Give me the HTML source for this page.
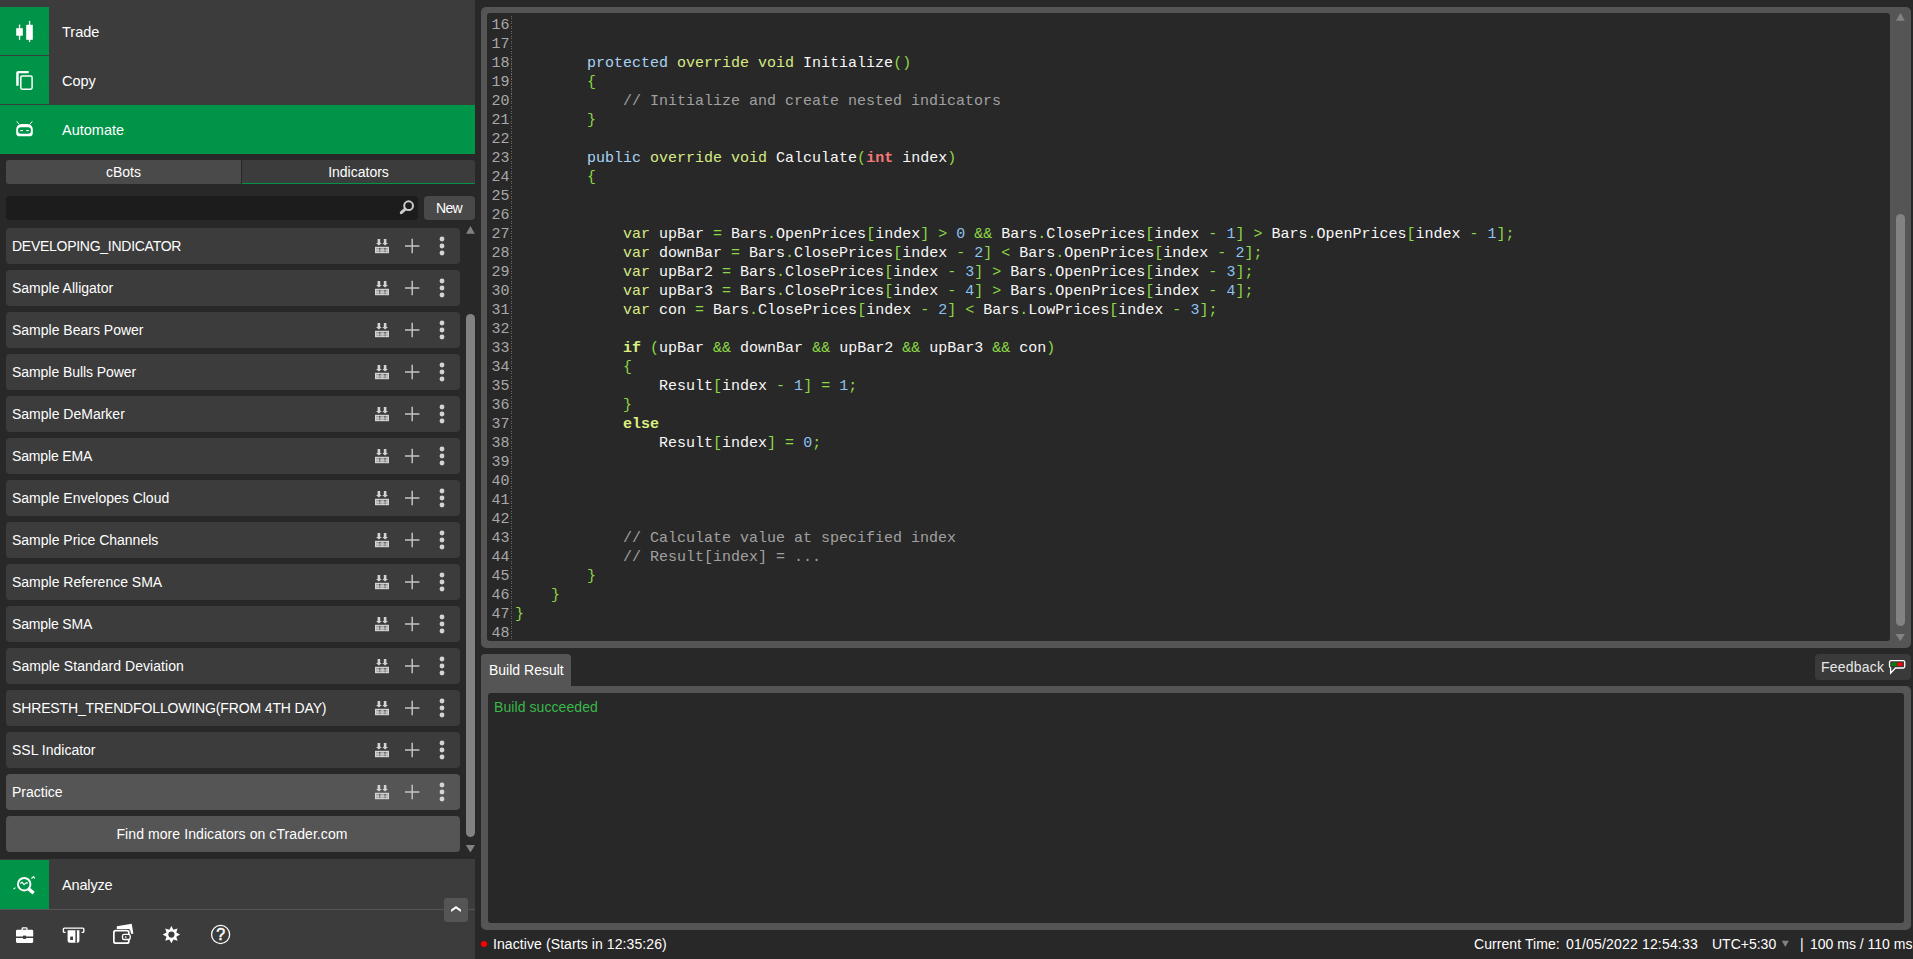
<!DOCTYPE html>
<html>
<head>
<meta charset="utf-8">
<title>cTrader Automate</title>
<style>
*{box-sizing:border-box;margin:0;padding:0}
html,body{width:1913px;height:959px;overflow:hidden;background:#282828}
body{position:relative;font-family:"Liberation Sans",sans-serif;color:#fff;font-size:14px}
.abs{position:absolute}
svg{display:block}
/* left panel */
#lp-top{left:0;top:0;width:475px;height:154px;background:#3c3c3c}
.nav{left:0;width:475px;height:48px}
.nav .ib{position:absolute;left:0;top:0;width:49px;height:100%;background:#009448}
.nav .lbl{position:absolute;left:62px;top:1px;height:100%;line-height:48px;font-size:14.5px;color:#fff;white-space:nowrap}
.nav svg{position:absolute;left:0;top:0}
#nav-auto{background:#009448;height:49px}
.tab{top:160px;height:24px;line-height:24px;text-align:center;font-size:14px;color:#fff}
#tab-cbots{left:6px;width:235px;background:#4a4a4a;border-radius:3px 0 0 3px}
#tab-ind{left:242px;width:233px;background:#3c3c3c;border-radius:0 3px 0 0;border-bottom:1px solid #009448}
#search{left:6px;top:196px;width:412px;height:24px;background:#1c1c1c;border-radius:4px}
#newbtn{left:424px;top:196px;width:51px;height:24px;background:#494949;border-radius:4px;text-align:center;line-height:24px;font-size:14px;letter-spacing:-0.6px;padding-right:1px}
.row{left:6px;width:454px;height:36px;background:#3c3c3c;border-radius:4px}
.row.sel{background:#555}
.row .t{position:absolute;left:6px;top:0;line-height:36px;font-size:14px;white-space:nowrap;color:#fff}
.row svg{position:absolute;left:0;top:0}
#findmore{left:6px;top:816px;width:454px;height:36px;background:#555;border-radius:4px;text-align:center;line-height:36px;font-size:14px;letter-spacing:.08px}
#lscroll{left:466px;top:314px;width:9px;height:523px;background:#828282;border-radius:4.5px}
.tri-up{width:0;height:0;border-left:4.7px solid transparent;border-right:4.7px solid transparent;border-bottom:8px solid #858585}
.tri-dn{width:0;height:0;border-left:4.7px solid transparent;border-right:4.7px solid transparent;border-top:8px solid #858585}
#analyze{left:0;top:859px;width:475px;height:50px;background:#3c3c3c}
#lsep{left:0;top:909px;width:475px;height:1px;background:#555}
#lbottom{left:0;top:910px;width:475px;height:49px;background:#3c3c3c}
#chev{left:444px;top:898px;width:24px;height:24px;background:#555;border-radius:3px}
/* editor */
#ed-frame{left:481px;top:7px;width:1430px;height:641px;background:#555;border-radius:5px}
#ed-inner{left:487px;top:13px;width:1403px;height:628px;background:#282828;border-radius:3px;overflow:hidden}
#ed-thumb{left:1896px;top:214px;width:9px;height:412px;background:#828282;border-radius:4.5px}
#gutter-line{left:24px;top:2.500px;width:1px;height:626px;background:repeating-linear-gradient(to bottom,#6a6a6a 0,#6a6a6a 1px,transparent 1px,transparent 2.5px)}
#lnums{left:0;top:3px;width:22.5px;text-align:right;font-family:"Liberation Mono",monospace;font-size:15px;line-height:19px;color:#a8a8a8;white-space:pre}
#code{left:28px;top:3px;font-family:"Liberation Mono",monospace;font-size:15px;line-height:19px;color:#f8f8f8;white-space:pre}
.kb{color:#a8d2f4}.ky{color:#d8ea86}.g{color:#8cd846}.r{color:#f47878;font-weight:bold}.n{color:#8cc2f0}.c{color:#a0a0a0}.kw{color:#dcf080;font-weight:bold}
/* build result */
#br-tab{left:481px;top:654px;width:90px;height:36px;background:#555;border-radius:4px 4px 0 0;font-size:14px;line-height:32px;padding-left:8px;white-space:nowrap}
#br-frame{left:481px;top:686px;width:1430px;height:244px;background:#555;border-radius:0 5px 5px 5px}
#br-inner{left:488px;top:693px;width:1416px;height:230px;background:#282828;border-radius:3px}
#br-text{left:494px;top:699px;font-size:14px;line-height:16px;color:#38b849;white-space:nowrap;letter-spacing:.08px}
#feedback{left:1815px;top:654px;width:96px;height:26px;background:#3a3a3a;border-radius:4px}
#feedback .t{position:absolute;left:6px;top:0;line-height:26px;font-size:14px;color:#e8e8e8;letter-spacing:.2px}
#feedback svg{position:absolute;left:0;top:0}
/* status bar */
.st{top:936px;line-height:16px;font-size:14px;color:#fff;white-space:nowrap}
#dot{left:481px;top:941px;width:6px;height:6px;border-radius:3px;background:#ff0000}

</style>
</head>
<body>
<div id="lp-top" class="abs"></div>
<div id="nav-trade" class="abs nav" style="top:7px"><div class="ib"></div><svg width="49" height="48" viewBox="0 0 49 48"><g fill="#fff"><rect x="16.2" y="21.2" width="6.6" height="7.5"/><rect x="18.9" y="17.6" width="1.3" height="15.2"/><rect x="26.2" y="17.8" width="6.6" height="15"/><rect x="28.9" y="13.9" width="1.3" height="21.2"/></g></svg>
<div class="lbl">Trade</div></div>
<div id="nav-copy" class="abs nav" style="top:56px"><div class="ib"></div><svg width="49" height="48" viewBox="0 0 49 48"><path d="M16.200 29.700V17.100a2 2 0 0 1 2-2H28.700v2.100H18.700V29.700z" fill="#fff"/><rect x="20.800" y="19.900" width="11.300" height="13.300" rx="1.400" fill="none" stroke="#fff" stroke-width="1.500"/></svg>
<div class="lbl">Copy</div></div>
<div id="nav-auto" class="abs nav" style="top:105px"><svg width="49" height="49" viewBox="0 0 49 49"><path d="M16.700 16.400l2.700 3.100M32.300 16.400l-2.700 3.100" stroke="#fff" stroke-width="1" fill="none"/><path d="M21.600 18.900h5.800a5.400 5.400 0 0 1 5.400 5.400v3.600a3.400 3.400 0 0 1-3.400 3.400h-9.800a3.400 3.400 0 0 1-3.400-3.400v-3.600a5.400 5.400 0 0 1 5.400-5.400z" fill="#fff"/><rect x="18.100" y="22.300" width="12.800" height="6.500" rx="2.800" fill="#009448"/><rect x="20.300" y="25" width="2.700" height="1.100" fill="#fff"/><rect x="26.200" y="25" width="2.700" height="1.100" fill="#fff"/></svg>
<div class="lbl" style="line-height:49px">Automate</div></div>
<div id="tab-cbots" class="abs tab">cBots</div>
<div id="tab-ind" class="abs tab">Indicators</div>
<div id="search" class="abs"><svg width="412" height="24" viewBox="0 0 412 24"><circle cx="402.600" cy="9.700" r="4.400" fill="none" stroke="#cbcbcb" stroke-width="2"/><path d="M399.200 13.100l-3.900 3.600" stroke="#cbcbcb" stroke-width="3" stroke-linecap="round"/></svg></div>
<div id="newbtn" class="abs">New</div>
<div class="abs row" style="top:228px"><span class="t" style="letter-spacing:-0.27px">DEVELOPING_INDICATOR</span><svg width="454" height="36" viewBox="0 0 454 36"><g fill="#d4d4d4"><path d="M371.600 11h2.600v4h1.600l-2.900 2.600-2.900-2.600h1.600z"/><path d="M377.800 11h2.600v4h1.600l-2.900 2.600-2.900-2.600h1.600z"/><rect x="369" y="18.800" width="14" height="6.400"/><circle cx="436" cy="11" r="2.450"/><circle cx="436" cy="18" r="2.450"/><circle cx="436" cy="25" r="2.450"/></g><g fill="#3c3c3c"><rect x="370" y="20.300" width="12" height="1" opacity=".45"/><rect x="370" y="22.700" width="12" height="1" opacity=".35"/><rect x="373.300" y="19.800" width="1" height="4.600" opacity=".5"/><rect x="378.500" y="19.800" width="1" height="4.600" opacity=".5"/><rect x="373.300" y="20.300" width="1" height="1"/><rect x="378.500" y="20.300" width="1" height="1"/></g><path d="M399 18h14.400M406.200 10.800v14.400" stroke="#c4c4c4" stroke-width="1.450" fill="none"/></svg>
</div>
<div class="abs row" style="top:270px"><span class="t">Sample Alligator</span><svg width="454" height="36" viewBox="0 0 454 36"><g fill="#d4d4d4"><path d="M371.600 11h2.600v4h1.600l-2.900 2.600-2.900-2.600h1.600z"/><path d="M377.800 11h2.600v4h1.600l-2.900 2.600-2.900-2.600h1.600z"/><rect x="369" y="18.800" width="14" height="6.400"/><circle cx="436" cy="11" r="2.450"/><circle cx="436" cy="18" r="2.450"/><circle cx="436" cy="25" r="2.450"/></g><g fill="#3c3c3c"><rect x="370" y="20.300" width="12" height="1" opacity=".45"/><rect x="370" y="22.700" width="12" height="1" opacity=".35"/><rect x="373.300" y="19.800" width="1" height="4.600" opacity=".5"/><rect x="378.500" y="19.800" width="1" height="4.600" opacity=".5"/><rect x="373.300" y="20.300" width="1" height="1"/><rect x="378.500" y="20.300" width="1" height="1"/></g><path d="M399 18h14.400M406.200 10.800v14.400" stroke="#c4c4c4" stroke-width="1.450" fill="none"/></svg>
</div>
<div class="abs row" style="top:312px"><span class="t">Sample Bears Power</span><svg width="454" height="36" viewBox="0 0 454 36"><g fill="#d4d4d4"><path d="M371.600 11h2.600v4h1.600l-2.900 2.600-2.900-2.600h1.600z"/><path d="M377.800 11h2.600v4h1.600l-2.900 2.600-2.900-2.600h1.600z"/><rect x="369" y="18.800" width="14" height="6.400"/><circle cx="436" cy="11" r="2.450"/><circle cx="436" cy="18" r="2.450"/><circle cx="436" cy="25" r="2.450"/></g><g fill="#3c3c3c"><rect x="370" y="20.300" width="12" height="1" opacity=".45"/><rect x="370" y="22.700" width="12" height="1" opacity=".35"/><rect x="373.300" y="19.800" width="1" height="4.600" opacity=".5"/><rect x="378.500" y="19.800" width="1" height="4.600" opacity=".5"/><rect x="373.300" y="20.300" width="1" height="1"/><rect x="378.500" y="20.300" width="1" height="1"/></g><path d="M399 18h14.400M406.200 10.800v14.400" stroke="#c4c4c4" stroke-width="1.450" fill="none"/></svg>
</div>
<div class="abs row" style="top:354px"><span class="t" style="letter-spacing:-0.06px">Sample Bulls Power</span><svg width="454" height="36" viewBox="0 0 454 36"><g fill="#d4d4d4"><path d="M371.600 11h2.600v4h1.600l-2.900 2.600-2.900-2.600h1.600z"/><path d="M377.800 11h2.600v4h1.600l-2.900 2.600-2.900-2.600h1.600z"/><rect x="369" y="18.800" width="14" height="6.400"/><circle cx="436" cy="11" r="2.450"/><circle cx="436" cy="18" r="2.450"/><circle cx="436" cy="25" r="2.450"/></g><g fill="#3c3c3c"><rect x="370" y="20.300" width="12" height="1" opacity=".45"/><rect x="370" y="22.700" width="12" height="1" opacity=".35"/><rect x="373.300" y="19.800" width="1" height="4.600" opacity=".5"/><rect x="378.500" y="19.800" width="1" height="4.600" opacity=".5"/><rect x="373.300" y="20.300" width="1" height="1"/><rect x="378.500" y="20.300" width="1" height="1"/></g><path d="M399 18h14.400M406.200 10.800v14.400" stroke="#c4c4c4" stroke-width="1.450" fill="none"/></svg>
</div>
<div class="abs row" style="top:396px"><span class="t">Sample DeMarker</span><svg width="454" height="36" viewBox="0 0 454 36"><g fill="#d4d4d4"><path d="M371.600 11h2.600v4h1.600l-2.900 2.600-2.900-2.600h1.600z"/><path d="M377.800 11h2.600v4h1.600l-2.900 2.600-2.900-2.600h1.600z"/><rect x="369" y="18.800" width="14" height="6.400"/><circle cx="436" cy="11" r="2.450"/><circle cx="436" cy="18" r="2.450"/><circle cx="436" cy="25" r="2.450"/></g><g fill="#3c3c3c"><rect x="370" y="20.300" width="12" height="1" opacity=".45"/><rect x="370" y="22.700" width="12" height="1" opacity=".35"/><rect x="373.300" y="19.800" width="1" height="4.600" opacity=".5"/><rect x="378.500" y="19.800" width="1" height="4.600" opacity=".5"/><rect x="373.300" y="20.300" width="1" height="1"/><rect x="378.500" y="20.300" width="1" height="1"/></g><path d="M399 18h14.400M406.200 10.800v14.400" stroke="#c4c4c4" stroke-width="1.450" fill="none"/></svg>
</div>
<div class="abs row" style="top:438px"><span class="t" style="letter-spacing:-0.15px">Sample EMA</span><svg width="454" height="36" viewBox="0 0 454 36"><g fill="#d4d4d4"><path d="M371.600 11h2.600v4h1.600l-2.900 2.600-2.900-2.600h1.600z"/><path d="M377.800 11h2.600v4h1.600l-2.900 2.600-2.900-2.600h1.600z"/><rect x="369" y="18.800" width="14" height="6.400"/><circle cx="436" cy="11" r="2.450"/><circle cx="436" cy="18" r="2.450"/><circle cx="436" cy="25" r="2.450"/></g><g fill="#3c3c3c"><rect x="370" y="20.300" width="12" height="1" opacity=".45"/><rect x="370" y="22.700" width="12" height="1" opacity=".35"/><rect x="373.300" y="19.800" width="1" height="4.600" opacity=".5"/><rect x="378.500" y="19.800" width="1" height="4.600" opacity=".5"/><rect x="373.300" y="20.300" width="1" height="1"/><rect x="378.500" y="20.300" width="1" height="1"/></g><path d="M399 18h14.400M406.200 10.800v14.400" stroke="#c4c4c4" stroke-width="1.450" fill="none"/></svg>
</div>
<div class="abs row" style="top:480px"><span class="t">Sample Envelopes Cloud</span><svg width="454" height="36" viewBox="0 0 454 36"><g fill="#d4d4d4"><path d="M371.600 11h2.600v4h1.600l-2.900 2.600-2.900-2.600h1.600z"/><path d="M377.800 11h2.600v4h1.600l-2.900 2.600-2.900-2.600h1.600z"/><rect x="369" y="18.800" width="14" height="6.400"/><circle cx="436" cy="11" r="2.450"/><circle cx="436" cy="18" r="2.450"/><circle cx="436" cy="25" r="2.450"/></g><g fill="#3c3c3c"><rect x="370" y="20.300" width="12" height="1" opacity=".45"/><rect x="370" y="22.700" width="12" height="1" opacity=".35"/><rect x="373.300" y="19.800" width="1" height="4.600" opacity=".5"/><rect x="378.500" y="19.800" width="1" height="4.600" opacity=".5"/><rect x="373.300" y="20.300" width="1" height="1"/><rect x="378.500" y="20.300" width="1" height="1"/></g><path d="M399 18h14.400M406.200 10.800v14.400" stroke="#c4c4c4" stroke-width="1.450" fill="none"/></svg>
</div>
<div class="abs row" style="top:522px"><span class="t">Sample Price Channels</span><svg width="454" height="36" viewBox="0 0 454 36"><g fill="#d4d4d4"><path d="M371.600 11h2.600v4h1.600l-2.900 2.600-2.900-2.600h1.600z"/><path d="M377.800 11h2.600v4h1.600l-2.900 2.600-2.900-2.600h1.600z"/><rect x="369" y="18.800" width="14" height="6.400"/><circle cx="436" cy="11" r="2.450"/><circle cx="436" cy="18" r="2.450"/><circle cx="436" cy="25" r="2.450"/></g><g fill="#3c3c3c"><rect x="370" y="20.300" width="12" height="1" opacity=".45"/><rect x="370" y="22.700" width="12" height="1" opacity=".35"/><rect x="373.300" y="19.800" width="1" height="4.600" opacity=".5"/><rect x="378.500" y="19.800" width="1" height="4.600" opacity=".5"/><rect x="373.300" y="20.300" width="1" height="1"/><rect x="378.500" y="20.300" width="1" height="1"/></g><path d="M399 18h14.400M406.200 10.800v14.400" stroke="#c4c4c4" stroke-width="1.450" fill="none"/></svg>
</div>
<div class="abs row" style="top:564px"><span class="t">Sample Reference SMA</span><svg width="454" height="36" viewBox="0 0 454 36"><g fill="#d4d4d4"><path d="M371.600 11h2.600v4h1.600l-2.900 2.600-2.900-2.600h1.600z"/><path d="M377.800 11h2.600v4h1.600l-2.900 2.600-2.900-2.600h1.600z"/><rect x="369" y="18.800" width="14" height="6.400"/><circle cx="436" cy="11" r="2.450"/><circle cx="436" cy="18" r="2.450"/><circle cx="436" cy="25" r="2.450"/></g><g fill="#3c3c3c"><rect x="370" y="20.300" width="12" height="1" opacity=".45"/><rect x="370" y="22.700" width="12" height="1" opacity=".35"/><rect x="373.300" y="19.800" width="1" height="4.600" opacity=".5"/><rect x="378.500" y="19.800" width="1" height="4.600" opacity=".5"/><rect x="373.300" y="20.300" width="1" height="1"/><rect x="378.500" y="20.300" width="1" height="1"/></g><path d="M399 18h14.400M406.200 10.800v14.400" stroke="#c4c4c4" stroke-width="1.450" fill="none"/></svg>
</div>
<div class="abs row" style="top:606px"><span class="t" style="letter-spacing:-0.15px">Sample SMA</span><svg width="454" height="36" viewBox="0 0 454 36"><g fill="#d4d4d4"><path d="M371.600 11h2.600v4h1.600l-2.900 2.600-2.900-2.600h1.600z"/><path d="M377.800 11h2.600v4h1.600l-2.900 2.600-2.900-2.600h1.600z"/><rect x="369" y="18.800" width="14" height="6.400"/><circle cx="436" cy="11" r="2.450"/><circle cx="436" cy="18" r="2.450"/><circle cx="436" cy="25" r="2.450"/></g><g fill="#3c3c3c"><rect x="370" y="20.300" width="12" height="1" opacity=".45"/><rect x="370" y="22.700" width="12" height="1" opacity=".35"/><rect x="373.300" y="19.800" width="1" height="4.600" opacity=".5"/><rect x="378.500" y="19.800" width="1" height="4.600" opacity=".5"/><rect x="373.300" y="20.300" width="1" height="1"/><rect x="378.500" y="20.300" width="1" height="1"/></g><path d="M399 18h14.400M406.200 10.800v14.400" stroke="#c4c4c4" stroke-width="1.450" fill="none"/></svg>
</div>
<div class="abs row" style="top:648px"><span class="t" style="letter-spacing:0.06px">Sample Standard Deviation</span><svg width="454" height="36" viewBox="0 0 454 36"><g fill="#d4d4d4"><path d="M371.600 11h2.600v4h1.600l-2.900 2.600-2.900-2.600h1.600z"/><path d="M377.800 11h2.600v4h1.600l-2.900 2.600-2.900-2.600h1.600z"/><rect x="369" y="18.800" width="14" height="6.400"/><circle cx="436" cy="11" r="2.450"/><circle cx="436" cy="18" r="2.450"/><circle cx="436" cy="25" r="2.450"/></g><g fill="#3c3c3c"><rect x="370" y="20.300" width="12" height="1" opacity=".45"/><rect x="370" y="22.700" width="12" height="1" opacity=".35"/><rect x="373.300" y="19.800" width="1" height="4.600" opacity=".5"/><rect x="378.500" y="19.800" width="1" height="4.600" opacity=".5"/><rect x="373.300" y="20.300" width="1" height="1"/><rect x="378.500" y="20.300" width="1" height="1"/></g><path d="M399 18h14.400M406.200 10.800v14.400" stroke="#c4c4c4" stroke-width="1.450" fill="none"/></svg>
</div>
<div class="abs row" style="top:690px"><span class="t" style="letter-spacing:-0.14px">SHRESTH_TRENDFOLLOWING(FROM 4TH DAY)</span><svg width="454" height="36" viewBox="0 0 454 36"><g fill="#d4d4d4"><path d="M371.600 11h2.600v4h1.600l-2.900 2.600-2.900-2.600h1.600z"/><path d="M377.800 11h2.600v4h1.600l-2.900 2.600-2.900-2.600h1.600z"/><rect x="369" y="18.800" width="14" height="6.400"/><circle cx="436" cy="11" r="2.450"/><circle cx="436" cy="18" r="2.450"/><circle cx="436" cy="25" r="2.450"/></g><g fill="#3c3c3c"><rect x="370" y="20.300" width="12" height="1" opacity=".45"/><rect x="370" y="22.700" width="12" height="1" opacity=".35"/><rect x="373.300" y="19.800" width="1" height="4.600" opacity=".5"/><rect x="378.500" y="19.800" width="1" height="4.600" opacity=".5"/><rect x="373.300" y="20.300" width="1" height="1"/><rect x="378.500" y="20.300" width="1" height="1"/></g><path d="M399 18h14.400M406.200 10.800v14.400" stroke="#c4c4c4" stroke-width="1.450" fill="none"/></svg>
</div>
<div class="abs row" style="top:732px"><span class="t">SSL Indicator</span><svg width="454" height="36" viewBox="0 0 454 36"><g fill="#d4d4d4"><path d="M371.600 11h2.600v4h1.600l-2.900 2.600-2.900-2.600h1.600z"/><path d="M377.800 11h2.600v4h1.600l-2.900 2.600-2.900-2.600h1.600z"/><rect x="369" y="18.800" width="14" height="6.400"/><circle cx="436" cy="11" r="2.450"/><circle cx="436" cy="18" r="2.450"/><circle cx="436" cy="25" r="2.450"/></g><g fill="#3c3c3c"><rect x="370" y="20.300" width="12" height="1" opacity=".45"/><rect x="370" y="22.700" width="12" height="1" opacity=".35"/><rect x="373.300" y="19.800" width="1" height="4.600" opacity=".5"/><rect x="378.500" y="19.800" width="1" height="4.600" opacity=".5"/><rect x="373.300" y="20.300" width="1" height="1"/><rect x="378.500" y="20.300" width="1" height="1"/></g><path d="M399 18h14.400M406.200 10.800v14.400" stroke="#c4c4c4" stroke-width="1.450" fill="none"/></svg>
</div>
<div class="abs row sel" style="top:774px"><span class="t">Practice</span><svg width="454" height="36" viewBox="0 0 454 36"><g fill="#d4d4d4"><path d="M371.600 11h2.600v4h1.600l-2.900 2.600-2.900-2.600h1.600z"/><path d="M377.800 11h2.600v4h1.600l-2.900 2.600-2.900-2.600h1.600z"/><rect x="369" y="18.800" width="14" height="6.400"/><circle cx="436" cy="11" r="2.450"/><circle cx="436" cy="18" r="2.450"/><circle cx="436" cy="25" r="2.450"/></g><g fill="#3c3c3c"><rect x="370" y="20.300" width="12" height="1" opacity=".45"/><rect x="370" y="22.700" width="12" height="1" opacity=".35"/><rect x="373.300" y="19.800" width="1" height="4.600" opacity=".5"/><rect x="378.500" y="19.800" width="1" height="4.600" opacity=".5"/><rect x="373.300" y="20.300" width="1" height="1"/><rect x="378.500" y="20.300" width="1" height="1"/></g><path d="M399 18h14.400M406.200 10.800v14.400" stroke="#c4c4c4" stroke-width="1.450" fill="none"/></svg>
</div>
<div id="findmore" class="abs" style="padding-right:2px">Find more Indicators on cTrader.com</div>
<div id="lscroll" class="abs"></div>
<div id="analyze" class="abs nav"><div class="ib" style="top:1px;height:49px"></div><div class="abs" style="left:0;top:1px"><svg width="49" height="49" viewBox="0 0 49 49"><circle cx="24.200" cy="24.200" r="6.250" fill="none" stroke="#fff" stroke-width="1.950"/><path d="M28.500 28.900l5.200 4.200" stroke="#fff" stroke-width="3.400" fill="none"/><path d="M20.200 23.500l1.800-1.200 2.200 2.300 2.200-2 1.400.700" stroke="#fff" stroke-width="1.250" fill="none" stroke-linejoin="round"/><path d="M13.500 29.200l1.900-1.600M31.400 18.500l2.200-1.900 1.200 1.900" stroke="#fff" stroke-width="1.100" fill="none"/></svg>
</div><div class="lbl" style="top:2px;height:49px;line-height:49px;letter-spacing:-.15px">Analyze</div></div>
<div id="lsep" class="abs"></div>
<div id="lbottom" class="abs"><svg width="475" height="49" viewBox="0 0 475 49">
<g fill="#fff">
<path d="M21.6 19.8v-1.2a1.3 1.3 0 0 1 1.3-1.3h3.4a1.3 1.3 0 0 1 1.3 1.3v1.2h4.3a1.3 1.3 0 0 1 1.3 1.3v5.5H16v-5.5a1.3 1.3 0 0 1 1.3-1.3zM22.9 18.6v1.2h3.4v-1.200z"/>
<path d="M16 28h17.2v3.600a1.300 1.300 0 0 1-1.300 1.300H17.300a1.300 1.300 0 0 1-1.300-1.300z"/>
<rect x="23" y="25.6" width="3.100" height="3.300" fill="#3c3c3c"/>
</g>
<path d="M65.600 22.400h-1.200a1 1 0 0 1-1-1v-2.300a1 1 0 0 1 1-1h18.400a1 1 0 0 1 1 1v2.300a1 1 0 0 1-1 1h-1.200" fill="none" stroke="#fff" stroke-width="1.400"/>
<path d="M67.600 20.200h11.800v10.600a2 2 0 0 1-2 2h-7.800a2 2 0 0 1-2-2z" fill="#fff"/>
<rect x="75.400" y="20.200" width="1.500" height="12.600" fill="#3c3c3c"/>
<rect x="70.200" y="26.600" width="2.800" height="3.400" fill="#3c3c3c"/>
<path d="M116.800 16.200L131.700 13.700L133.400 23.700H131L130.300 20.600Q130 19 128.300 19L116.800 18.900z" fill="#fff"/>
<rect x="113.850" y="20.650" width="15" height="12.500" rx="2" fill="none" stroke="#fff" stroke-width="1.700"/>
<rect x="122.500" y="24.400" width="7.700" height="5.100" rx="1.600" fill="#3c3c3c" stroke="#fff" stroke-width="1.350"/>
<circle cx="125.700" cy="27" r=".850" fill="#fff"/>
<polygon points="171.40,15.90 173.43,19.70 177.55,18.45 176.30,22.57 180.10,24.60 176.30,26.63 177.55,30.75 173.43,29.50 171.40,33.30 169.37,29.50 165.25,30.75 166.50,26.63 162.70,24.60 166.50,22.57 165.25,18.45 169.37,19.70" fill="#fff"/>
<circle cx="171.400" cy="24.600" r="3.100" fill="#3c3c3c"/>
<circle cx="220.600" cy="24.500" r="9.050" fill="none" stroke="#fff" stroke-width="1.300"/>
<text x="220.600" y="30.300" text-anchor="middle" font-family="Liberation Sans, sans-serif" font-size="16" fill="#fff" stroke="#fff" stroke-width="0.500">?</text>
</svg>
</div>
<div id="chev" class="abs"><svg width="24" height="24" viewBox="0 0 24 24"><polygon points="7.100,11.600 12,8 16.900,11.600 16.900,14 12,10.500 7.100,14" fill="#fff"/></svg></div>
<div id="ed-frame" class="abs"></div>
<div id="ed-inner" class="abs"><div id="gutter-line" class="abs"></div><div id="lnums" class="abs">16
17
18
19
20
21
22
23
24
25
26
27
28
29
30
31
32
33
34
35
36
37
38
39
40
41
42
43
44
45
46
47
48</div><div id="code" class="abs">

        <span class="kb">protected</span> <span class="ky">override</span> <span class="ky">void</span> Initialize<span class="g">()</span>
        <span class="g">{</span>
            <span class="c">// Initialize and create nested indicators</span>
        <span class="g">}</span>

        <span class="kb">public</span> <span class="ky">override</span> <span class="ky">void</span> Calculate<span class="g">(</span><span class="r">int</span> index<span class="g">)</span>
        <span class="g">{</span>


            <span class="ky">var</span> upBar <span class="g">=</span> Bars<span class="g">.</span>OpenPrices<span class="g">[</span>index<span class="g">]</span> <span class="g">&gt;</span> <span class="n">0</span> <span class="g">&amp;&amp;</span> Bars<span class="g">.</span>ClosePrices<span class="g">[</span>index <span class="g">-</span> <span class="n">1</span><span class="g">]</span> <span class="g">&gt;</span> Bars<span class="g">.</span>OpenPrices<span class="g">[</span>index <span class="g">-</span> <span class="n">1</span><span class="g">]</span><span class="g">;</span>
            <span class="ky">var</span> downBar <span class="g">=</span> Bars<span class="g">.</span>ClosePrices<span class="g">[</span>index <span class="g">-</span> <span class="n">2</span><span class="g">]</span> <span class="g">&lt;</span> Bars<span class="g">.</span>OpenPrices<span class="g">[</span>index <span class="g">-</span> <span class="n">2</span><span class="g">]</span><span class="g">;</span>
            <span class="ky">var</span> upBar2 <span class="g">=</span> Bars<span class="g">.</span>ClosePrices<span class="g">[</span>index <span class="g">-</span> <span class="n">3</span><span class="g">]</span> <span class="g">&gt;</span> Bars<span class="g">.</span>OpenPrices<span class="g">[</span>index <span class="g">-</span> <span class="n">3</span><span class="g">]</span><span class="g">;</span>
            <span class="ky">var</span> upBar3 <span class="g">=</span> Bars<span class="g">.</span>ClosePrices<span class="g">[</span>index <span class="g">-</span> <span class="n">4</span><span class="g">]</span> <span class="g">&gt;</span> Bars<span class="g">.</span>OpenPrices<span class="g">[</span>index <span class="g">-</span> <span class="n">4</span><span class="g">]</span><span class="g">;</span>
            <span class="ky">var</span> con <span class="g">=</span> Bars<span class="g">.</span>ClosePrices<span class="g">[</span>index <span class="g">-</span> <span class="n">2</span><span class="g">]</span> <span class="g">&lt;</span> Bars<span class="g">.</span>LowPrices<span class="g">[</span>index <span class="g">-</span> <span class="n">3</span><span class="g">]</span><span class="g">;</span>

            <span class="kw">if</span> <span class="g">(</span>upBar <span class="g">&amp;&amp;</span> downBar <span class="g">&amp;&amp;</span> upBar2 <span class="g">&amp;&amp;</span> upBar3 <span class="g">&amp;&amp;</span> con<span class="g">)</span>
            <span class="g">{</span>
                Result<span class="g">[</span>index <span class="g">-</span> <span class="n">1</span><span class="g">]</span> <span class="g">=</span> <span class="n">1</span><span class="g">;</span>
            <span class="g">}</span>
            <span class="kw">else</span>
                Result<span class="g">[</span>index<span class="g">]</span> <span class="g">=</span> <span class="n">0</span><span class="g">;</span>




            <span class="c">// Calculate value at specified index</span>
            <span class="c">// Result[index] = ...</span>
        <span class="g">}</span>
    <span class="g">}</span>
<span class="g">}</span>
</div></div>
<div id="ed-thumb" class="abs"></div>
<div id="br-tab" class="abs">Build Result</div>
<div id="br-frame" class="abs"></div>
<div id="br-inner" class="abs"></div>
<div id="br-text" class="abs">Build succeeded</div>
<div id="feedback" class="abs"><span class="t">Feedback</span><svg width="96" height="26" viewBox="0 0 96 26"><path d="M76.200 6.600h11.900a1.600 1.600 0 0 1 1.600 1.600v4.200a1.600 1.600 0 0 1-1.600 1.600h-7.600l-4.900 5.200v-5.400a1.600 1.600 0 0 1-1.100-1.500v-4.100a1.600 1.600 0 0 1 1.600-1.600z" fill="#3a3a3a" stroke="#fff" stroke-width="1.3"/><rect x="76.400" y="8.600" width="5" height="3.500" fill="#008000"/><rect x="82.500" y="8.600" width="5" height="3.500" fill="#ff0000"/></svg></div>
<div id="dot" class="abs"></div>
<div class="abs st" style="left:493px;letter-spacing:.09px">Inactive (Starts in 12:35:26)</div>
<div class="abs st" style="left:1474px;letter-spacing:.07px">Current Time:</div>
<div class="abs st" style="left:1566px;letter-spacing:.18px">01/05/2022 12:54:33</div>
<div class="abs st" style="left:1712px">UTC+5:30</div>
<div class="abs st" style="left:1800px">|</div>
<div class="abs st" style="left:1810px">100 ms / 110 ms</div>
<svg class="abs" style="left:0;top:0;pointer-events:none" width="1913" height="959" viewBox="0 0 1913 959"><g fill="#828282"><polygon points="466.100,233.700 474.800,233.700 470.450,226"/><polygon points="465.800,844.900 475,844.900 470.400,852.400"/><polygon points="1896,20.700 1904.800,20.700 1900.400,13"/><polygon points="1895.700,633.900 1904.900,633.900 1900.300,641.300"/><polygon points="1781.800,940.800 1788.800,940.800 1785.300,947"/></g></svg>

</body>
</html>
